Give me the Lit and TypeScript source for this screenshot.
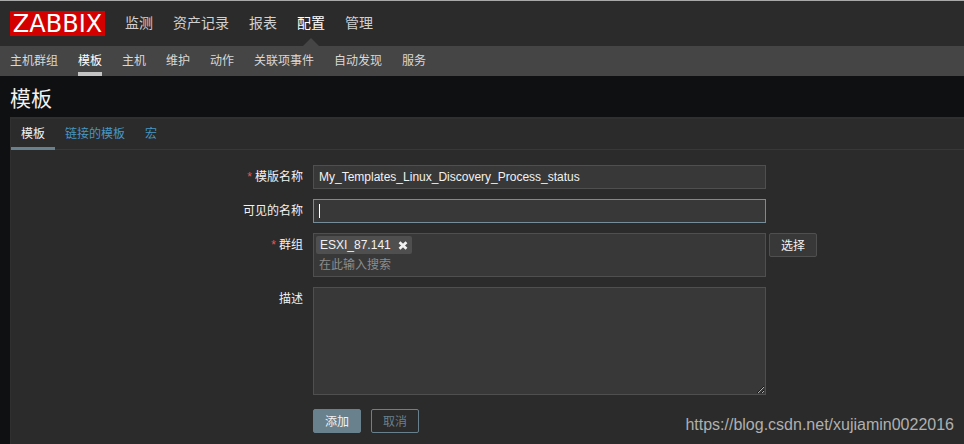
import { LitElement, html, css } from "lit";
import { customElement, state } from "lit/decorators.js";
import { classMap } from "lit/directives/class-map.js";

@customElement("app-root")
export class AppRoot extends LitElement {
  @state() private section = "配置";
  @state() private page = "模板";
  @state() private tab = "模板";

  private sections = ["监测", "资产记录", "报表", "配置", "管理"];
  private pages = ["主机群组", "模板", "主机", "维护", "动作", "关联项事件", "自动发现", "服务"];
  private tabs = ["模板", "链接的模板", "宏"];

  static styles = css`
    :host {
      display: flex;
      flex-direction: column;
      position: relative;
      box-sizing: border-box;
      min-height: 100vh;
      overflow: hidden;
      background: #0e1012;
      color: #f2f2f2;
      font: 12px/16px "Liberation Sans", "Noto Sans CJK SC", sans-serif;
    }
    * {
      box-sizing: border-box;
    }
    a {
      text-decoration: none;
      color: inherit;
      white-space: nowrap;
    }
    .top {
      display: flex;
      align-items: center;
      gap: 20px;
      height: 46px;
      padding: 0 10px;
      border-top: 1px solid #a9a9a9;
      background: #2b2b2b;
    }
    .logo {
      width: 95px;
      height: 25px;
      background: #d40000;
      color: #fff;
      font: 24px/26px "DejaVu Sans", sans-serif;
      text-align: center;
    }
    .sections {
      display: flex;
      align-self: stretch;
      gap: 20px;
      font-size: 14px;
      line-height: 44px;
      color: #d0d0d0;
    }
    .section {
      position: relative;
    }
    .section.on {
      color: #fff;
    }
    .section.on::after {
      content: "";
      position: absolute;
      left: 50%;
      bottom: 0;
      margin-left: -8px;
      border: 8px solid transparent;
      border-top: 0;
      border-bottom-color: #454545;
    }
    .sub {
      display: flex;
      gap: 20px;
      height: 30px;
      padding: 0 10px;
      background: #454545;
      color: #d8d8d8;
      line-height: 30px;
    }
    .page.on {
      color: #fff;
      border-bottom: 4px solid #c4c4c4;
    }
    h1 {
      margin: 0;
      padding: 2px 10px 0;
      font-size: 21px;
      font-weight: 400;
      line-height: 41px;
      height: 41px;
    }
    .panel {
      flex: 1;
      margin-left: 10px;
      border: 1px solid #303030;
      border-width: 2px 0 0 1px;
      background: #2b2b2b;
    }
    .tabs {
      display: flex;
      height: 31px;
      border-bottom: 1px solid #383838;
      color: #4796c4;
      line-height: 31px;
    }
    .tab {
      height: 31px;
      padding: 0 10px;
    }
    .tab.on {
      color: #f2f2f2;
      border-bottom: 3px solid #69808d;
    }
    .form {
      display: grid;
      grid-template-columns: 292px minmax(0, 1fr);
      column-gap: 10px;
      row-gap: 10px;
      padding: 15px 10px 10px 0;
    }
    .name {
      text-align: right;
      line-height: 24px;
    }
    .must::before {
      content: "*";
      margin-right: 3px;
      color: #e45959;
    }
    .field {
      display: flex;
      align-items: flex-start;
      gap: 3px;
    }
    .box {
      position: relative;
      display: block;
      width: 100%;
      max-width: 453px;
      margin: 0;
      border: 1px solid #4f4f4f;
      border-radius: 0;
      background: #383838;
      color: #f2f2f2;
      font: inherit;
      outline: none;
    }
    input.box {
      height: 24px;
      padding: 0 5px;
    }
    .active {
      position: relative;
      width: 100%;
    }
    .active .box {
      border-color: #768d99;
      caret-color: transparent;
    }
    .active::after {
      content: "";
      position: absolute;
      left: 6px;
      top: 5px;
      width: 1px;
      height: 14px;
      background: #fff;
    }
    .multi {
      height: 44px;
      padding: 2px;
    }
    .chip {
      display: flex;
      align-items: center;
      gap: 7px;
      width: 96px;
      height: 18px;
      padding: 0 4px;
      border-radius: 2px;
      background: #4f4f4f;
      white-space: nowrap;
    }
    .remove {
      display: flex;
      padding: 0;
      border: 0;
      background: none;
      color: #f2f2f2;
    }
    .search {
      display: block;
      width: 100%;
      height: 20px;
      padding: 2px 3px 0;
      border: 0;
      background: none;
      color: #f2f2f2;
      font: inherit;
      outline: none;
    }
    .search::placeholder {
      color: #8c8c8c;
      opacity: 1;
    }
    .btn {
      width: 48px;
      height: 24px;
      flex: none;
      padding: 2px 0 0;
      border: 1px solid #4f4f4f;
      border-radius: 2px;
      background: #383838;
      color: #f2f2f2;
      font: inherit;
    }
    .btn.main {
      border-color: #69808d;
      background: #69808d;
    }
    .btn.alt {
      border-color: #69808d;
      background: none;
      color: #69808d;
    }
    textarea.box {
      height: 108px;
      padding: 4px 5px;
      resize: both;
    }
    .actions {
      grid-column: 2;
      display: flex;
      gap: 10px;
      padding-top: 4px;
    }
    .mark {
      position: absolute;
      right: 10px;
      bottom: 9px;
      color: #b0b0b0;
      font-size: 16px;
      line-height: 20px;
    }
  `;

  private pick(e: Event, set: () => void) {
    e.preventDefault();
    set();
  }

  render() {
    return html`
      <header class="top">
        <a class="logo" href="#">ZABBIX</a>
        <nav class="sections">
          ${this.sections.map(
            (s) => html`<a
              href="#"
              class=${classMap({ section: true, on: s === this.section })}
              @click=${(e: Event) => this.pick(e, () => (this.section = s))}
              >${s}</a
            >`
          )}
        </nav>
      </header>
      <nav class="sub">
        ${this.pages.map(
          (p) => html`<a
            href="#"
            class=${classMap({ page: true, on: p === this.page })}
            @click=${(e: Event) => this.pick(e, () => (this.page = p))}
            >${p}</a
          >`
        )}
      </nav>
      <h1>模板</h1>
      <main class="panel">
        <nav class="tabs">
          ${this.tabs.map(
            (t) => html`<a
              href="#"
              class=${classMap({ tab: true, on: t === this.tab })}
              @click=${(e: Event) => this.pick(e, () => (this.tab = t))}
              >${t}</a
            >`
          )}
        </nav>
        <form class="form" @submit=${(e: Event) => e.preventDefault()}>
          <label class="name must" for="host">模版名称</label>
          <div class="field">
            <input class="box" id="host" type="text" value="My_Templates_Linux_Discovery_Process_status" />
          </div>
          <label class="name" for="visible">可见的名称</label>
          <div class="field">
            <div class="active"><input class="box" id="visible" type="text" /></div>
          </div>
          <label class="name must" for="groups">群组</label>
          <div class="field">
            <div class="box multi">
              <div class="chip">
                <span>ESXI_87.141</span>
                <button class="remove" type="button" aria-label="×">
                  <svg width="10" height="9" viewBox="0 0 10 9">
                    <path d="M1.5 1.3L8.5 7.7M8.5 1.3L1.5 7.7" stroke="currentColor" stroke-width="2.7" />
                  </svg>
                </button>
              </div>
              <input class="search" id="groups" type="text" placeholder="在此输入搜索" />
            </div>
            <button class="btn" type="button">选择</button>
          </div>
          <label class="name" for="about">描述</label>
          <div class="field"><textarea class="box" id="about"></textarea></div>
          <div class="actions">
            <button class="btn main" type="submit">添加</button>
            <button class="btn alt" type="button">取消</button>
          </div>
        </form>
      </main>
      <a class="mark" href="https://blog.csdn.net/xujiamin0022016">https://blog.csdn.net/xujiamin0022016</a>
    `;
  }
}
